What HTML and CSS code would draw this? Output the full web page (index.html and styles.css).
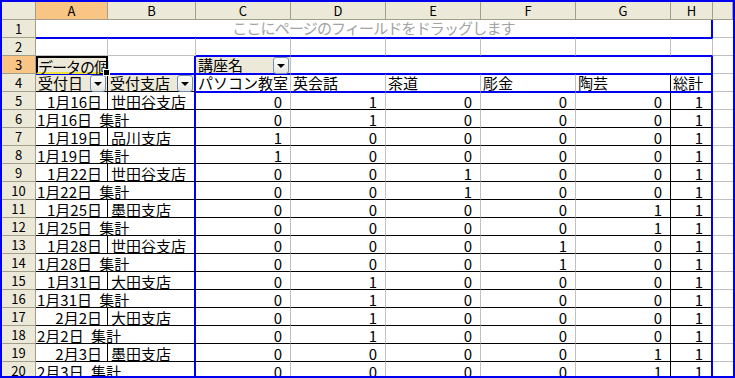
FILE: index.html
```html
<!DOCTYPE html>
<html lang="ja">
<head>
<meta charset="utf-8">
<title>ピボットテーブル</title>
<link rel="stylesheet" href="styles.css">
</head>
<body>
<div class="win">
  <div class="sheet">
    <!-- column headers -->
    <div class="c hd"></div>
    <div class="c hd on">A</div>
    <div class="c hd">B</div>
    <div class="c hd">C</div>
    <div class="c hd">D</div>
    <div class="c hd">E</div>
    <div class="c hd">F</div>
    <div class="c hd">G</div>
    <div class="c hd">H</div>
    <div class="c hd"></div>

    <!-- row 1 -->
    <div class="c rh">1</div>
    <div class="c page">ここにページのフィールドをドラッグします</div>
    <div class="c x"></div>

    <!-- row 2 -->
    <div class="c rh">2</div>
    <div class="c r2"></div>
    <div class="c r2"></div>
    <div class="c r2 bb"></div>
    <div class="c r2 bb"></div>
    <div class="c r2 bb"></div>
    <div class="c r2 bb"></div>
    <div class="c r2 bb"></div>
    <div class="c r2 bb"></div>
    <div class="c x"></div>

    <!-- row 3 -->
    <div class="c rh on">3</div>
    <div class="c sel">データの個<span class="fh"></span></div>
    <div class="c b3"></div>
    <div class="c fb c3"><span class="lbl">講座名</span><span class="dd"><i></i></span></div>
    <div class="c colarea"></div>
    <div class="c x"></div>

    <!-- row 4 -->
    <div class="c rh">4</div>
    <div class="c fb a4"><span class="lbl">受付日</span><span class="dd"><i></i></span></div>
    <div class="c fb b4"><span class="lbl">受付支店</span><span class="dd"><i></i></span></div>
    <div class="c ch">パソコン教室</div>
    <div class="c ch">英会話</div>
    <div class="c ch">茶道</div>
    <div class="c ch">彫金</div>
    <div class="c ch g">陶芸</div>
    <div class="c ch h">総計</div>
    <div class="c x"></div>

    <!-- row 5 -->
    <div class="c rh">5</div>
    <div class="c da">1月16日</div>
    <div class="c db">世田谷支店</div>
    <div class="c n top">0</div>
    <div class="c n top">1</div>
    <div class="c n top">0</div>
    <div class="c n top">0</div>
    <div class="c n g top">0</div>
    <div class="c n h top">1</div>
    <div class="c x"></div>

    <!-- row 6 -->
    <div class="c rh">6</div>
    <div class="c dab">1月16日 集計</div>
    <div class="c n">0</div>
    <div class="c n">1</div>
    <div class="c n">0</div>
    <div class="c n">0</div>
    <div class="c n g">0</div>
    <div class="c n h">1</div>
    <div class="c x"></div>

    <!-- row 7 -->
    <div class="c rh">7</div>
    <div class="c da">1月19日</div>
    <div class="c db">品川支店</div>
    <div class="c n">1</div>
    <div class="c n">0</div>
    <div class="c n">0</div>
    <div class="c n">0</div>
    <div class="c n g">0</div>
    <div class="c n h">1</div>
    <div class="c x"></div>

    <!-- row 8 -->
    <div class="c rh">8</div>
    <div class="c dab">1月19日 集計</div>
    <div class="c n">1</div>
    <div class="c n">0</div>
    <div class="c n">0</div>
    <div class="c n">0</div>
    <div class="c n g">0</div>
    <div class="c n h">1</div>
    <div class="c x"></div>

    <!-- row 9 -->
    <div class="c rh">9</div>
    <div class="c da">1月22日</div>
    <div class="c db">世田谷支店</div>
    <div class="c n">0</div>
    <div class="c n">0</div>
    <div class="c n">1</div>
    <div class="c n">0</div>
    <div class="c n g">0</div>
    <div class="c n h">1</div>
    <div class="c x"></div>

    <!-- row 10 -->
    <div class="c rh">10</div>
    <div class="c dab">1月22日 集計</div>
    <div class="c n">0</div>
    <div class="c n">0</div>
    <div class="c n">1</div>
    <div class="c n">0</div>
    <div class="c n g">0</div>
    <div class="c n h">1</div>
    <div class="c x"></div>

    <!-- row 11 -->
    <div class="c rh">11</div>
    <div class="c da">1月25日</div>
    <div class="c db">墨田支店</div>
    <div class="c n">0</div>
    <div class="c n">0</div>
    <div class="c n">0</div>
    <div class="c n">0</div>
    <div class="c n g">1</div>
    <div class="c n h">1</div>
    <div class="c x"></div>

    <!-- row 12 -->
    <div class="c rh">12</div>
    <div class="c dab">1月25日 集計</div>
    <div class="c n">0</div>
    <div class="c n">0</div>
    <div class="c n">0</div>
    <div class="c n">0</div>
    <div class="c n g">1</div>
    <div class="c n h">1</div>
    <div class="c x"></div>

    <!-- row 13 -->
    <div class="c rh">13</div>
    <div class="c da">1月28日</div>
    <div class="c db">世田谷支店</div>
    <div class="c n">0</div>
    <div class="c n">0</div>
    <div class="c n">0</div>
    <div class="c n">1</div>
    <div class="c n g">0</div>
    <div class="c n h">1</div>
    <div class="c x"></div>

    <!-- row 14 -->
    <div class="c rh">14</div>
    <div class="c dab">1月28日 集計</div>
    <div class="c n">0</div>
    <div class="c n">0</div>
    <div class="c n">0</div>
    <div class="c n">1</div>
    <div class="c n g">0</div>
    <div class="c n h">1</div>
    <div class="c x"></div>

    <!-- row 15 -->
    <div class="c rh">15</div>
    <div class="c da">1月31日</div>
    <div class="c db">大田支店</div>
    <div class="c n">0</div>
    <div class="c n">1</div>
    <div class="c n">0</div>
    <div class="c n">0</div>
    <div class="c n g">0</div>
    <div class="c n h">1</div>
    <div class="c x"></div>

    <!-- row 16 -->
    <div class="c rh">16</div>
    <div class="c dab">1月31日 集計</div>
    <div class="c n">0</div>
    <div class="c n">1</div>
    <div class="c n">0</div>
    <div class="c n">0</div>
    <div class="c n g">0</div>
    <div class="c n h">1</div>
    <div class="c x"></div>

    <!-- row 17 -->
    <div class="c rh">17</div>
    <div class="c da">2月2日</div>
    <div class="c db">大田支店</div>
    <div class="c n">0</div>
    <div class="c n">1</div>
    <div class="c n">0</div>
    <div class="c n">0</div>
    <div class="c n g">0</div>
    <div class="c n h">1</div>
    <div class="c x"></div>

    <!-- row 18 -->
    <div class="c rh">18</div>
    <div class="c dab">2月2日 集計</div>
    <div class="c n">0</div>
    <div class="c n">1</div>
    <div class="c n">0</div>
    <div class="c n">0</div>
    <div class="c n g">0</div>
    <div class="c n h">1</div>
    <div class="c x"></div>

    <!-- row 19 -->
    <div class="c rh">19</div>
    <div class="c da">2月3日</div>
    <div class="c db">墨田支店</div>
    <div class="c n">0</div>
    <div class="c n">0</div>
    <div class="c n">0</div>
    <div class="c n">0</div>
    <div class="c n g">1</div>
    <div class="c n h">1</div>
    <div class="c x"></div>

    <!-- row 20 -->
    <div class="c rh">20</div>
    <div class="c dab">2月3日 集計</div>
    <div class="c n">0</div>
    <div class="c n">0</div>
    <div class="c n">0</div>
    <div class="c n">0</div>
    <div class="c n g">1</div>
    <div class="c n h">1</div>
    <div class="c x"></div>
  </div>
</div>
</body>
</html>
```

FILE: styles.css
```css
:root {
  --blue: #0000f0;
  --grid: #c0c0c0;
  --hdr: #ece9d8;
  --hdrline: #a19e8b;
  --sel: #f9c584;
}

html, body {
  margin: 0;
  padding: 0;
  background: #fff;
}

.win {
  width: 735px;
  height: 378px;
  box-sizing: border-box;
  border: 2px solid var(--blue);
  overflow: hidden;
}

.sheet {
  display: grid;
  grid-template-columns: 34px 72px 88px repeat(5, 95px) 42px 20px;
  grid-auto-rows: 18px;
  background: #fff;
  font-family: "Noto Sans CJK JP", "Noto Sans", sans-serif;
  font-size: 15px;
  color: #000;
}

.c {
  box-sizing: border-box;
  border-right: 1px solid var(--grid);
  border-bottom: 1px solid var(--grid);
  padding: 2px 1px 0;
  line-height: 16px;
  white-space: nowrap;
  min-width: 0;
}

/* headers */
.hd,
.rh {
  background: var(--hdr);
  border-right-color: var(--hdrline);
  border-bottom-color: var(--hdrline);
  font-size: 13px;
  text-align: center;
  padding: 1px 0 0;
}

.hd.on,
.rh.on {
  background: var(--sel);
}

/* page field drop area (row 1) */
.page {
  grid-column: span 8;
  border-right: 2px solid var(--blue);
  border-bottom-color: var(--blue);
  text-align: center;
  color: #a3a3a3;
  padding-top: 0;
  letter-spacing: -0.85px;
}

/* row 2 */
.r2 {
  border-top: 1px solid var(--blue);
}

.r2.bb {
  border-bottom-color: var(--blue);
}

/* row 3 */
.sel {
  position: relative;
  background: var(--hdr);
  border: 2px solid #000;
  border-bottom: 2px solid #ece23c;
  padding: 1px 0 0;
  letter-spacing: -1px;
}

.fh {
  position: absolute;
  right: -4px;
  bottom: -4px;
  width: 5px;
  height: 5px;
  background: #000;
  border: 1px solid #fff;
  z-index: 2;
}

.b3 {
  border-right: 2px solid var(--blue);
  border-bottom-color: var(--blue);
}

.colarea {
  grid-column: span 5;
  border-top: 1px solid var(--blue);
  border-right: 2px solid var(--blue);
  border-bottom-color: var(--blue);
}

/* pivot field buttons */
.fb {
  display: flex;
  justify-content: space-between;
  align-items: flex-start;
  background: var(--hdr);
  padding: 0 0 0 2px;
  border-top: 1px solid var(--blue);
}

.c3 {
  border-bottom-color: var(--blue);
}

.a4 {
  border-right-color: #000;
  border-bottom-color: #000;
}

.b4 {
  border-right: 2px solid var(--blue);
  border-bottom-color: #000;
}

.dd {
  flex: none;
  width: 16px;
  height: 17px;
  margin-right: 1px;
  box-sizing: border-box;
  border: 1px solid #6f8db0;
  border-radius: 3px;
  background: linear-gradient(#ffffff, #e6e6e0);
  display: flex;
  align-items: center;
  justify-content: center;
}

.dd i {
  display: block;
  width: 0;
  height: 0;
  border-left: 4px solid transparent;
  border-right: 4px solid transparent;
  border-top: 4px solid #000;
}

/* column items (row 4) */
.ch {
  border-top: 1px solid var(--blue);
  border-bottom-color: var(--blue);
  padding: 0 1px 0 2px;
}

.ch.g {
  border-right-color: #000;
}

.ch.h {
  border-right: 2px solid var(--blue);
}

/* data rows */
.da {
  text-align: right;
  padding-right: 5px;
  border-right-color: #000;
  border-bottom-color: #000;
}

.db {
  padding-left: 3px;
  border-right: 2px solid var(--blue);
  border-bottom-color: #000;
}

.dab {
  grid-column: span 2;
  padding-left: 1px;
  word-spacing: 4px;
  border-right: 2px solid var(--blue);
  border-bottom-color: #000;
}

.n {
  text-align: right;
  padding-right: 8px;
  border-bottom-color: #000;
}

.n.top {
  border-top: 1px solid var(--blue);
  padding-top: 1px;
}

.n.g {
  border-right-color: #000;
}

.n.h {
  border-right: 2px solid var(--blue);
}

.x {
  border-right: none;
}
```
